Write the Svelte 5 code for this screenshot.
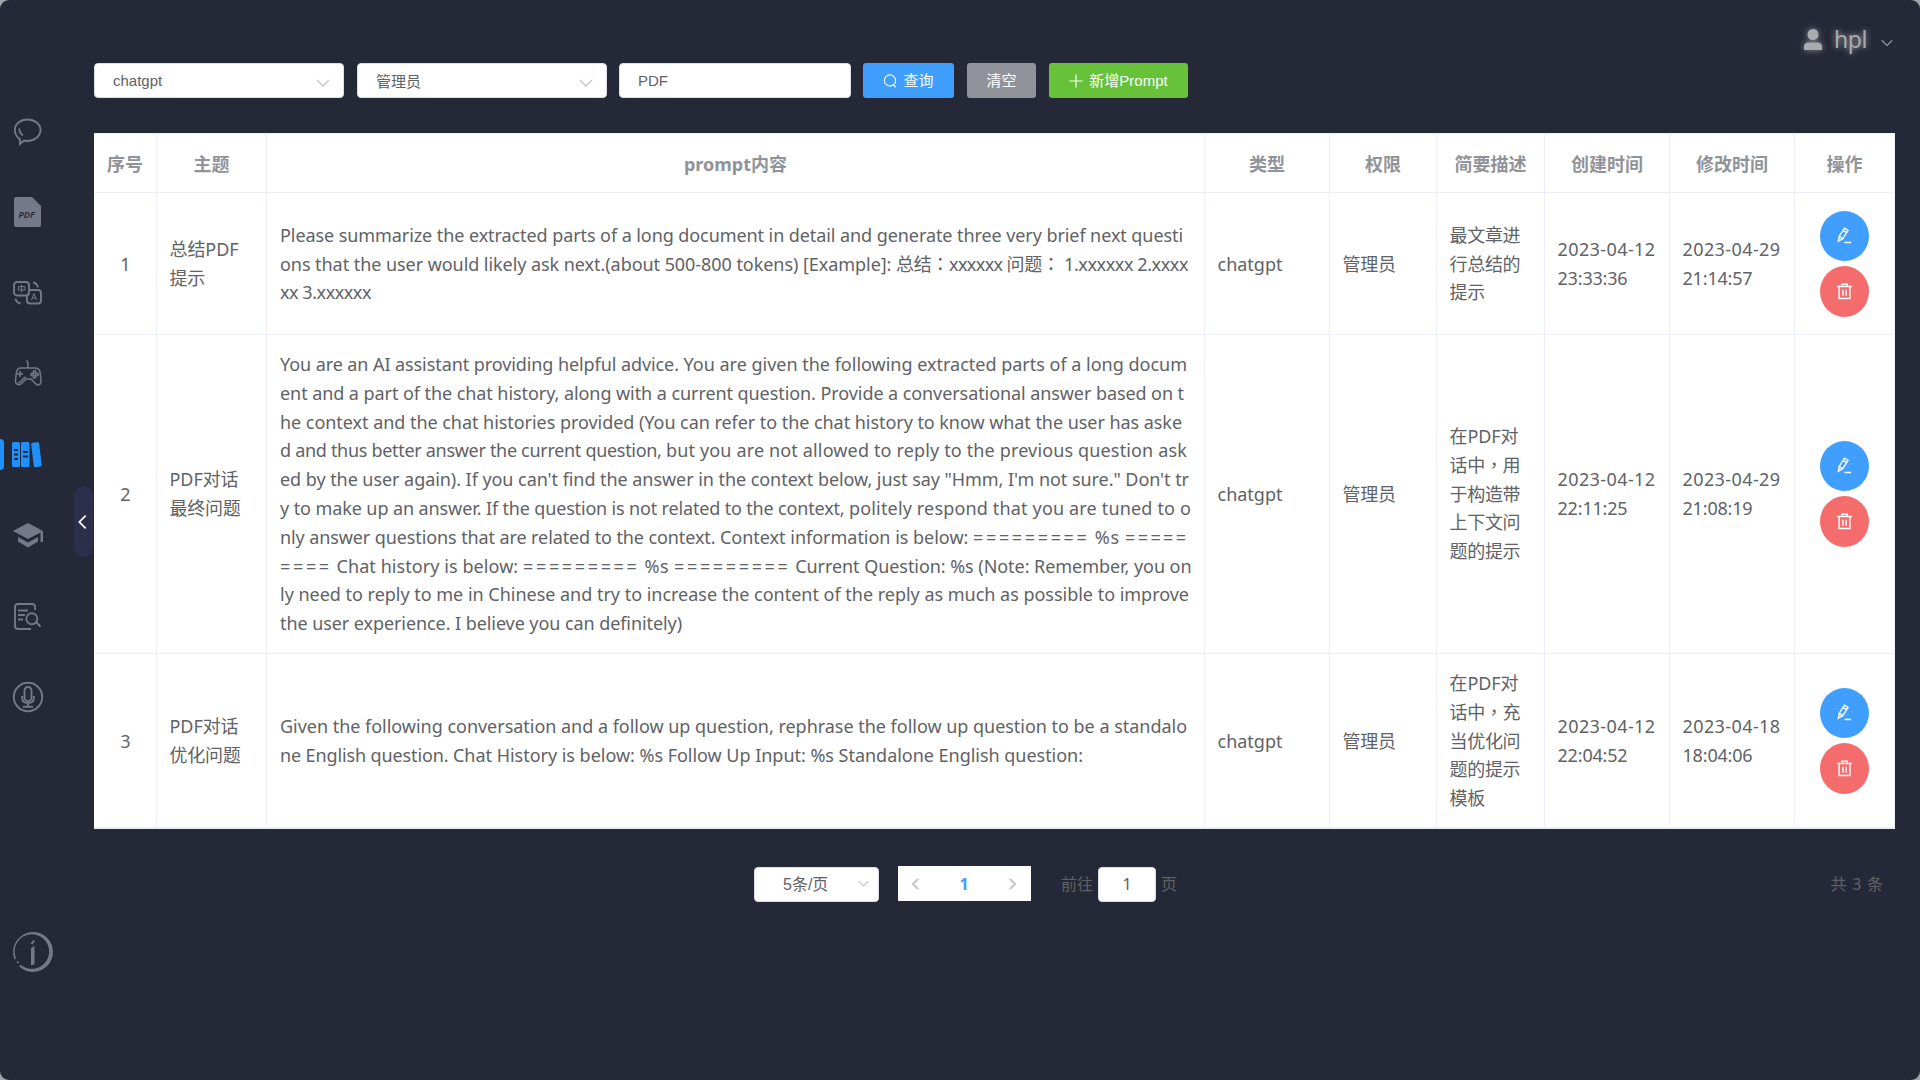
<script>
  const fit = (node, width) => {
    const apply = () => {
      if (!width) return;
      node.style.letterSpacing = '0px';
      const natural = node.getBoundingClientRect().width;
      const count = [...node.textContent].length;
      node.style.letterSpacing = `${(width - natural) / count}px`;
    };
    apply();
    document.fonts?.ready.then(apply);
  };
  const heads = ['序号', '主题', 'prompt内容', '类型', '权限', '简要描述', '创建时间', '修改时间', '操作'];
  // Every line is a flat list of text / width pairs
  const rows = [
    {
      h: 'r1', topic: [['总结PDF', 69], ['提示', 35.5]],
      prompt: [
        ['Please summarize the extracted parts of a long document in detail and generate three very brief next questi', 903],
        ['ons that the user would likely ask next.(about 500-800 tokens) [Example]: ', 616, '总结：', 53, 'xxxxxx ', 57.5, '问题： ', 57.5, '1.xxxxxx 2.xxxx', 124],
        ['xx 3.xxxxxx', 91]
      ],
      desc: ['最文章进', '行总结的', '提示'], created: ['2023-04-12', '23:33:36'], updated: ['2023-04-29', '21:14:57']
    },
    {
      h: 'r2', topic: [['PDF对话', 69], ['最终问题', 71]],
      prompt: [
        ['You are an AI assistant providing helpful advice. ', 403.5, 'You are given the following extracted parts of a long docum', 503.5],
        ['ent and a part of the chat history, along with a current question. ', 540.5, 'Provide a conversational answer based on t', 363.5],
        ['he context and the chat histories provided ', 359, '(You can refer to the chat history to know what the user has aske', 543],
        ['d and thus better answer the current question, ', 386, 'but you are not allowed to reply to the previous question ask', 521],
        ['ed by the user again). If you can\'t find the answer in the context below, just say "Hmm, I\'m not sure." Don\'t tr', 909],
        ['y to make up an answer. ', 206, 'If the question is not related to the context, ', 363, 'politely respond that you are tuned to o', 342],
        ['nly answer questions that are related to the context. ', 440, 'Context information is below: ', 253, '=========', 116.5, ' %s ', 35.5, '=====', 63.5],
        ['====', 51.8, ' Chat history is below: ', 191.2, '=========', 116.5, ' %s ', 34.5, '=========', 116.5, ' Current Question: %s (Note: Remember, you on', 401],
        ['ly need to reply to me in Chinese and try to increase the content of the reply as much as possible to improve', 909],
        ['the user experience. I believe you can definitely)', 402]
      ],
      desc: ['在PDF对', '话中，用', '于构造带', '上下文问', '题的提示'], created: ['2023-04-12', '22:11:25'], updated: ['2023-04-29', '21:08:19']
    },
    {
      h: 'r3', topic: [['PDF对话', 69], ['优化问题', 71]],
      prompt: [
        ['Given the following conversation and a follow up question, rephrase the follow up question to be a standalo', 907],
        ['ne English question. ', 173, 'Chat History is below: %s Follow Up Input: %s Standalone English question:', 630]
      ],
      desc: ['在PDF对', '话中，充', '当优化问', '题的提示', '模板'], created: ['2023-04-12', '22:04:52'], updated: ['2023-04-18', '18:04:06']
    }
  ];
  const pairs = (line) => line.flatMap((text, i) => (i % 2 ? [] : [[text, line[i + 1]]]));
  const descWidth = (text) => (text.includes('PDF') ? 69 : text.length * 17.7);
</script>

{#snippet lines(items)}
  {#each items as item}
    <div class="line">{#each pairs(item) as [text, width]}<span use:fit={width}>{#each text.split(/([：，])/) as part}{#if part === '：' || part === '，'}<i>{part}</i>{:else}{part}{/if}{/each}</span>{/each}</div>
  {/each}
{/snippet}
{#snippet chevron()}
  <svg class="chev" viewBox="0 0 14 14"><path d="M1 4l6 6 6-6" /></svg>
{/snippet}

<div class="page">
  <div class="screen">
    <nav>
      <div class="item"><svg viewBox="0 0 30 30" class="bold"><path d="M7 23.500C4 21 1.800 18 1.800 14 1.800 8 7.500 3.500 14.500 3.500S27.500 8 27.500 14 21.500 25 14.500 25c-1.500 0-2.500-.2-3.500-.5L7 28zM6.300 12.500c0 2.800 1.200 5.200 3.700 7" /></svg></div>
      <div class="item"><svg viewBox="0 0 30 30"><path class="fill" d="M3 0h16l9 9v19q0 2-2 2H3q-2 0-2-2V2q0-2 2-2z" /><text x="5.500" y="21">PDF</text></svg></div>
      <div class="item"><svg viewBox="0 0 30 30" class="bold"><rect x="1" y="4" width="15" height="13.500" rx="3" /><path d="M16 12h9q3 0 3 3v7.500q0 3-3 3H17q-3 0-3-3v-5M20 4.500q4 .5 5 5M2.500 20.500q.5 4 5 5" /><path class="thin" d="M5.500 8.500h6.500v3.500H5.500zM8.700 6.500v8M18.500 22l2.500-6.500 2.500 6.500M19.200 20h3.600" /></svg></div>
      <div class="item"><svg viewBox="0 0 30 30"><path d="M15 9c-1-2 1-3 0-5-.7-1-1.500-1.500-1-3M8 9h14c3 0 4.500 1.500 5 4l1 8c.5 5-3 6-5 4l-5-5h-5l-5 5c-3 2-6 0-5.500-4l1-8c.5-3 2-4 4.500-4zM4 15h6M7 12v6M5 24c3 0 4-5 8-6" /><circle cx="21.500" cy="13" r="1.300" /><circle cx="21.500" cy="18" r="1.300" /><circle cx="19" cy="15.500" r="1.300" /><circle cx="24" cy="15.500" r="1.300" /></svg></div>
      <div class="item active"><svg viewBox="0 0 30 30"><rect class="fill" x="0" y="2" width="8" height="25" rx="1.500" /><rect class="fill" x="9" y="2" width="8.500" height="25" rx="1.500" /><rect class="fill" x="20.500" y="2.500" width="8" height="24.500" rx="1.500" transform="rotate(-7 24 15)" /><path class="slot" d="M2 10h4M2 14.500h4M2 19h4M11 12h5M11 16.500h5" /></svg></div>
      <div class="item"><svg viewBox="0 0 30 30"><path class="fill" d="M15 3l15 8v11h-2.500v-9.500L15 19 0 11zM5 17l10 5.500L25 17v4.500l-10 6-10-6z" /></svg></div>
      <div class="item"><svg viewBox="0 0 30 30" class="bold"><path d="M22 9V6q0-3-3-3H5Q2 3 2 6v19q0 3 3 3h13M5 9.500h10M5 14h7M5 18.500h5M23 21l4.500 4.500" /><circle cx="18.800" cy="17.800" r="5.500" /></svg></div>
      <div class="item"><svg viewBox="0 0 30 30" class="bold"><circle cx="15" cy="15" r="14.200" /><rect x="11.500" y="5" width="7" height="14" rx="3.500" /><path d="M9.200 14v2q0 5 5.800 5t5.800-5v-2M15 21v3.500M10 24.800h10" /></svg></div>
      <div class="info"><svg viewBox="0 0 40 40"><path class="fill" fill-rule="evenodd" d="M20 0A20 20 0 1 1 6 34.300l1.600-1.600A17.300 17.300 0 1 0 3 26.500l-1.400 1.200A20 20 0 0 1 20 0zM3.500 30l1.500-1 1 1.500-1.500 1zM17.500 11.500l3-3.500 1.500 1-2.500 3.500zM18 16l3.500-2v18.500l-3.500 1z" /></svg></div>
    </nav>
    <aside><div class="handle"><svg viewBox="0 0 10 16"><path d="M8.500 1L1.500 8l7 7" /></svg></div></aside>
    <main>
      <header>
        <svg class="avatar" viewBox="0 0 18 21"><circle cx="9" cy="5.500" r="5.500" /><path d="M0 21v-3q0-4.500 4.500-4.500h9q4.500 0 4.500 4.500v3z" /></svg>
        <span use:fit={33}>hpl</span>
        {@render chevron()}
      </header>
      <div class="filters">
        <div class="field select"><span>chatgpt</span>{@render chevron()}</div>
        <div class="field select"><span>管理员</span>{@render chevron()}</div>
        <div class="field input"><span>PDF</span></div>
        <button class="query"><svg viewBox="0 0 14 14"><circle cx="7" cy="6.500" r="5.600" /><path d="M10 10.500l2.800 2.800" /></svg><span>查询</span></button>
        <button class="clear"><span>清空</span></button>
        <button class="add"><svg viewBox="0 0 14 14"><path d="M7 .5v13M.5 7h13" /></svg><span>新增Prompt</span></button>
      </div>
      <section class="table">
        <div class="row head">
          {#each heads as head}<div class="cell">{head}</div>{/each}
        </div>
        {#each rows as row, index}
          <div class="row {row.h}">
            <div class="cell center">{index + 1}</div>
            <div class="cell">{@render lines(row.topic)}</div>
            <div class="cell prompt">{@render lines(row.prompt)}</div>
            <div class="cell">{@render lines([['chatgpt', 65]])}</div>
            <div class="cell">{@render lines([['管理员', 53.2]])}</div>
            <div class="cell">{@render lines(row.desc.map((t) => [t, descWidth(t)]))}</div>
            <div class="cell">{@render lines([[row.created[0], 98], [row.created[1], 70]])}</div>
            <div class="cell">{@render lines([[row.updated[0], 98], [row.updated[1], 70]])}</div>
            <div class="cell actions">
              <button class="edit" aria-label="edit"><svg viewBox="0 0 16 18"><path d="M1.500 15l.8-5L8 1.200l3.800 2.500-5.700 8.700zM6.500 3.500l3.800 2.500M2.300 10l3.500 2.400M8 16.500h7" /></svg></button>
              <button class="delete" aria-label="delete"><svg viewBox="0 0 16 18"><path d="M0 3.700h16M5 3.500V1.200h6v2.300M2.200 4v12.500h11.600V4M6.300 7v6.500M9.700 7v6.500" /></svg></button>
            </div>
          </div>
        {/each}
      </section>
      <footer>
        <div class="size"><span>5条/页</span>{@render chevron()}</div>
        <div class="pager"><svg viewBox="0 0 8 14"><path d="M7 1L1 7l6 6" /></svg><b>1</b><svg viewBox="0 0 8 14"><path d="M1 1l6 6-6 6" /></svg></div>
        <span class="go">前往</span><div class="jump">1</div><span class="unit">页</span>
        <span class="total">共 3 条</span>
      </footer>
    </main>
  </div>
</div>

<style>
  :global(body) { background: #a3a5ac; }
  * { box-sizing: border-box; }
  .page { height: 1080px; overflow: hidden; font-family: 'Noto Sans', 'Noto Sans CJK SC', sans-serif; }
  .screen { height: 1080px; display: flex; background: #252836; border-radius: 9px; }
  svg { display: block; fill: none; stroke: currentColor; overflow: visible; flex: none; }
  i { font-family: 'Noto Sans CJK TC', sans-serif; font-style: normal; line-height: 0; }
  nav { width: 74px; padding-top: 91px; color: #757889; }
  .item { height: 80.800px; padding-left: 13px; display: flex; align-items: center; }
  .item svg { width: 30px; height: 30px; stroke-width: 1.500; }
  .item svg.bold { stroke-width: 1.900; }
  .item svg .thin { stroke-width: 1; }
  .item svg .fill, .fill { fill: currentColor; stroke: none; }
  .item text { fill: #252836; stroke: none; font: italic 600 9px 'Noto Sans', sans-serif; }
  .active { color: #1e90ff; padding-left: 0; gap: 8px; }
  .active::before { content: ''; width: 4px; height: 31px; background: #1e90ff; border-radius: 0 5px 5px 0; }
  .item svg .slot { stroke: #252836; stroke-width: 1.800; }
  .info { padding: 195px 0 0 12.500px; }
  .info svg { width: 40px; height: 40px; }
  aside { width: 20px; display: flex; flex-direction: column; padding-top: 486px; }
  .handle { width: 19px; height: 71px; border-radius: 10px; background: #2b2f4c; color: #fff; display: flex; align-items: center; justify-content: center; }
  .handle svg { width: 9px; height: 16px; stroke-width: 1.900; margin-right: 2px; }
  main { width: 1801px; }
  header { height: 63px; display: flex; justify-content: flex-end; align-items: center; padding: 15px 2px 0 0; color: #a9abb1; font-size: 23px; text-shadow: 0 0 6px #a9abb1; }
  .avatar { width: 18px; height: 21px; fill: currentColor; stroke: none; margin-right: 12px; filter: drop-shadow(0 0 3px #888a93); }
  header .chev { width: 12px; height: 12px; margin: 7px 0 0 14px; color: #a9abb1; }
  .chev { width: 14px; height: 14px; color: #c0c4cc; stroke-width: 1.300; }
  .filters { display: flex; height: 35px; font-family: 'Liberation Sans', 'Noto Sans CJK SC', sans-serif; font-size: 15px; color: #606266; }
  .filters span { padding-bottom: 1px; }
  .filters button span { padding-bottom: 2px; }
  .field { height: 35px; border-radius: 4px; background: #fff; border: 1px solid #dcdfe6; display: flex; align-items: center; justify-content: space-between; padding: 0 13px 0 18px; }
  .field .chev { margin-top: 5px; }
  .select { width: 250px; margin-right: 13px; }
  .select + .input { margin-left: -1px; }
  .input { width: 232px; margin-right: 12px; }
  button { border: 0; color: #fff; display: flex; align-items: center; justify-content: center; font: inherit; padding: 0; }
  .filters button { height: 35px; border-radius: 3px; margin-right: 13px; gap: 6px; }
  .filters button svg { width: 14px; height: 14px; stroke-width: 1.100; }
  .query { width: 91px; background: #409eff; }
  .clear { width: 69px; background: #909399; }
  .filters .add { width: 139px; background: #67c23a; }
  .table { margin-top: 35px; width: 1801px; background: #fff; color: #606266; font-size: 18px; line-height: 28.800px; border-top: 1px solid #ebeef5; }
  .row { display: grid; grid-template-columns: 63px 110px 938px 125px 107px 108px 125px 125px 100px; }
  .cell { border-right: 1px solid #ebeef5; border-bottom: 1px solid #ebeef5; padding: 1px 0 0 12.500px; display: flex; flex-direction: column; justify-content: center; overflow: hidden; white-space: nowrap; }
  .line { height: 28.800px; white-space: pre; }
  .prompt { padding-left: 13px; }
  .head { height: 59px; color: #909399; font-weight: 700; }
  .head .cell, .center { padding: 1px 0 0 1px; align-items: center; }
  .head .cell { padding: 2px 0 0; }
  .r1 { height: 142px; }
  .r2 { height: 319px; }
  .r2 .cell { padding-top: 0; }
  .r3 { height: 175px; }
  .r3 .cell { border-bottom-width: 2px; }
  .row .actions { padding-left: 0; align-items: center; gap: 5px; }
  .actions button { width: 49px; height: 51px; border-radius: 50%; }
  .actions .edit { height: 50px; }
  .actions svg { width: 15px; height: 17px; stroke-width: 1.500; margin-bottom: 1px; }
  .edit { background: #409eff; }
  .delete { background: #f56c6c; }
  footer { display: flex; align-items: center; height: 35px; margin-top: 37px; padding-left: 660px; color: #606266; font-size: 16px; }
  .size, .jump { height: 35px; border-radius: 4px; background: #fff; border: 1px solid #dcdfe6; display: flex; align-items: center; font-size: 16px; }
  .size { width: 125px; padding: 0 9px 2px 28px; justify-content: space-between; font-family: 'Liberation Sans', 'Noto Sans CJK SC', sans-serif; margin-top: 1px; }
  .size .chev { width: 11px; height: 11px; stroke-width: 1.600; }
  .pager { margin-left: 19px; width: 133px; height: 35px; background: #fff; display: flex; align-items: center; justify-content: space-between; padding: 0 15px 0 14px; color: #409eff; }
  .pager svg { width: 7px; height: 12px; color: #c0c4cc; stroke-width: 2.200; }
  .go { margin-left: 30px; padding-bottom: 1px; }
  .unit { padding-bottom: 1px; }
  .jump { width: 58px; margin: 1px 5px 0; justify-content: center; }
  .total { margin-left: auto; padding: 0 12px 1px 0; word-spacing: 1.500px; }
</style>
